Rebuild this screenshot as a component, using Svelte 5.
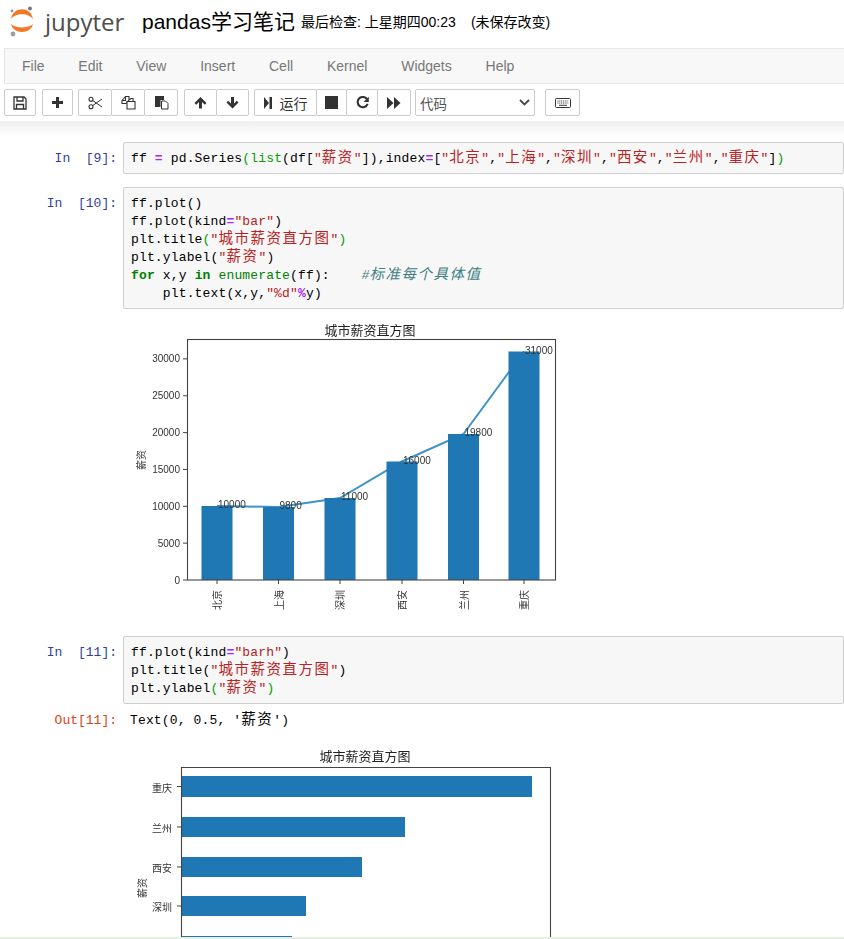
<script>
  const menus = ['File', 'Edit', 'View', 'Insert', 'Cell', 'Kernel', 'Widgets', 'Help'];

  const cityBars = [
    { name: '北京', x: 217, top: 506, value: 10000 },
    { name: '上海', x: 278.5, top: 507, value: 9800 },
    { name: '深圳', x: 340, top: 498, value: 11000 },
    { name: '西安', x: 402, top: 461.5, value: 16000 },
    { name: '兰州', x: 463.5, top: 434, value: 19800 },
    { name: '重庆', x: 524, top: 351.5, value: 31000 }
  ];
  const yTicks = [0, 5000, 10000, 15000, 20000, 25000, 30000];
  const linePoints = cityBars.map((b) => `${b.x - 187},${b.top - 325}`).join(' ');

  // the last bar runs off the bottom of the window, its label is not visible
  const hBars = [
    { name: '重庆', y: 776, h: 21, w: 351 },
    { name: '兰州', y: 817, h: 20, w: 224 },
    { name: '西安', y: 857, h: 20, w: 181 },
    { name: '深圳', y: 896, h: 20, w: 125 },
    { name: '', y: 936, h: 20, w: 111 }
  ];
</script>

<div class="page">
  <header class="site-header">
    <svg class="logo" width="32" height="38" viewBox="9 5 32 38">
      <path d="M11 19C13 6 31 6 33 19C29 12.500 15 12.500 11 19Z" fill="#f37726" />
      <path d="M11 24C13 34.500 31 34.500 33 24C29 28.500 15 28.500 11 24Z" fill="#f37726" />
      <circle cx="30" cy="8.500" r="1.900" fill="#767677" />
      <circle cx="12" cy="11" r="1.400" fill="#989798" />
      <circle cx="13" cy="34" r="2.400" fill="#9e9e9e" />
    </svg>
    <span class="wordmark">jupyter</span>
    <span class="nb-name">pandas学习笔记</span>
    <span class="checkpoint">最后检查: 上星期四00:23</span>
    <span class="autosave">(未保存改变)</span>
  </header>

  <nav class="menubar">
    {#each menus as m}
      <span class="menu-item">{m}</span>
    {/each}
  </nav>

  <div class="toolbar">
    <div class="btn-group">
      <button class="btn w32" aria-label="save">
        <svg width="14" height="14" viewBox="0 0 14 14"><path d="M1 1h10l2 2v10H1z M4 1v4h6V1 M3.500 13V8.500h7V13" fill="none" stroke="#333" stroke-width="1.300" /></svg>
      </button>
    </div>
    <div class="btn-group tight">
      <button class="btn w31" aria-label="insert">
        <svg width="13" height="13" viewBox="0 0 13 13"><path d="M5 1h3v4h4v3H8v4H5V8H1V5h4z" fill="#333" /></svg>
      </button>
    </div>
    <div class="btn-group">
      <button class="btn w34" aria-label="cut">
        <svg width="15" height="14" viewBox="0 0 15 14"><circle cx="3" cy="3.200" r="2" fill="none" stroke="#333" stroke-width="1.100" /><circle cx="3" cy="10.800" r="2" fill="none" stroke="#333" stroke-width="1.100" /><path d="M4.600 4.400L14 11M4.600 9.600L14 3" stroke="#333" stroke-width="1" /></svg>
      </button>
      <button class="btn w34" aria-label="copy">
        <svg width="15" height="15" viewBox="0 0 15 15"><path d="M1 5.500L4.500 1.500H8V5L5 8.500H1z M4.500 1.500V5.500H1 M8 5L10 3.500h2V6" fill="none" stroke="#333" stroke-width="1.100" /><path d="M6 6.500h8v7.500H6z" fill="#fff" stroke="#333" stroke-width="1.100" /></svg>
      </button>
      <button class="btn w34" aria-label="paste">
        <svg width="15" height="15" viewBox="0 0 15 15"><path d="M1 1h9v4H6.500v7H1z" fill="#333" /><path d="M7.500 6h4l2.500 2.500V14H7.500z" fill="#fff" stroke="#333" stroke-width="1" /></svg>
      </button>
    </div>
    <div class="btn-group tight">
      <button class="btn w33" aria-label="up">
        <svg width="13" height="13" viewBox="0 0 13 13"><path d="M6.500 1L12.500 7L10.800 8.700L8 5.900V12.500H5V5.900L2.200 8.700L.5 7z" fill="#333" /></svg>
      </button>
      <button class="btn w33" aria-label="down">
        <svg width="13" height="13" viewBox="0 0 13 13"><path d="M6.500 12.500L12.500 6.500L10.800 4.800L8 7.600V1H5V7.600L2.200 4.800L.5 6.500z" fill="#333" /></svg>
      </button>
    </div>
    <div class="btn-group run-group">
      <button class="btn run">
        <svg width="8" height="12" viewBox="0 0 8 12"><path d="M0 0L5 6L0 12z M5.500 0H8V12H5.500z" fill="#333" /></svg>
        <span>运行</span>
      </button>
      <button class="btn w31" aria-label="stop">
        <svg width="13" height="13" viewBox="0 0 13 13"><rect width="13" height="13" fill="#333" /></svg>
      </button>
      <button class="btn w32" aria-label="restart">
        <svg width="13" height="13" viewBox="0 0 13 13"><path d="M11 3.200A5.100 5.100 0 1 0 11.600 7.800" fill="none" stroke="#333" stroke-width="2.100" /><path d="M12.800 .8V6H7.600z" fill="#333" /></svg>
      </button>
      <button class="btn w34" aria-label="run all">
        <svg width="14" height="12" viewBox="0 0 14 12"><path d="M0 0L6.500 6L0 12z M7 0L13.500 6L7 12z" fill="#333" /></svg>
      </button>
    </div>
    <div class="cell-type">
      <span>代码</span>
      <svg width="11" height="7" viewBox="0 0 11 7"><path d="M1 1L5.500 5.500L10 1" fill="none" stroke="#444" stroke-width="1.800" /></svg>
    </div>
    <button class="btn kb" aria-label="keyboard">
      <svg width="16" height="10" viewBox="0 0 16 10"><rect x=".5" y=".5" width="15" height="9" rx="1" fill="none" stroke="#333" /><path d="M2.500 3h11M2.500 5h11" stroke="#333" stroke-dasharray="1 .8" /><path d="M4 7.300h8" stroke="#333" /></svg>
    </button>
  </div>

  <main class="notebook">
    <section class="cell first">
      <div class="prompt in">In&nbsp;&nbsp;[9]:</div>
      <pre class="input">ff <span class="o">=</span> pd.Series<span class="g">(list</span>(df[<span class="s">"<span class="zh">薪资</span>"</span>]),index<span class="o">=</span>[<span class="s">"<span class="zh">北京</span>"</span>,<span class="s">"<span class="zh">上海</span>"</span>,<span class="s">"<span class="zh">深圳</span>"</span>,<span class="s">"<span class="zh">西安</span>"</span>,<span class="s">"<span class="zh">兰州</span>"</span>,<span class="s">"<span class="zh">重庆</span>"</span>]<span class="g">)</span></pre>
    </section>

    <section class="cell">
      <div class="prompt in">In&nbsp;&nbsp;[10]:</div>
      <pre class="input">ff.plot()
ff.plot(kind<span class="o">=</span><span class="s">"bar"</span>)
plt.title<span class="g">(</span><span class="s">"<span class="zh">城市薪资直方图</span>"</span><span class="g">)</span>
plt.ylabel(<span class="s">"<span class="zh">薪资</span>"</span>)
<span class="k">for</span> x,y <span class="k">in</span> <span class="b">enumerate</span>(ff):    <span class="c">#<span class="zh">标准每个具体值</span></span>
    plt.text(x,y,<span class="s">"%d"</span><span class="o">%</span>y)</pre>
    </section>

    <div class="output chart-one">
      <svg width="440" height="292" viewBox="0 0 440 292">
        <text x="183" y="9.500" class="chart-title" text-anchor="middle">城市薪资直方图</text>
        <polyline points={linePoints} fill="none" stroke="#3f93c9" stroke-width="2" />
        {#each cityBars as b}
          <rect x={b.x - 187 - 15.5} y={b.top - 325} width="31" height={580 - b.top} fill="#1f77b4" />
          <line x1={b.x - 187} y1="255" x2={b.x - 187} y2="259" stroke="#444" />
          <text x={b.x - 187 + 1} y={b.top - 325 + 2} class="tick">{b.value}</text>
          <text transform="translate({b.x - 187 + 4},285) rotate(-90)" class="tick">{b.name}</text>
        {/each}
        {#each yTicks as t}
          <line x1="-4" y1={255 - t * 0.00737} x2="0" y2={255 - t * 0.00737} stroke="#444" />
          <text x="-7" y={255 - t * 0.00737 + 3.5} class="tick" text-anchor="end">{t}</text>
        {/each}
        <text transform="translate(-42.500,135) rotate(-90)" class="tick" text-anchor="middle">薪资</text>
        <rect x=".5" y="14.500" width="368" height="240.500" fill="none" stroke="#444" stroke-width="1.100" />
      </svg>
    </div>

    <section class="cell third">
      <div class="prompt in">In&nbsp;&nbsp;[11]:</div>
      <pre class="input">ff.plot(kind<span class="o">=</span><span class="s">"barh"</span>)
plt.title(<span class="s">"<span class="zh">城市薪资直方图</span>"</span>)
plt.ylabel<span class="g">(</span><span class="s">"<span class="zh">薪资</span>"</span><span class="g">)</span></pre>
    </section>

    <section class="cell out-row">
      <div class="prompt out">Out[11]:</div>
      <pre class="out-text">Text(0, 0.5, '<span class="zh">薪资</span>')</pre>
    </section>

    <div class="output chart-two">
      <svg width="440" height="200" viewBox="0 0 440 200">
        <text x="184" y="6" class="chart-title" text-anchor="middle">城市薪资直方图</text>
        {#each hBars as b}
          <rect x="0" y={b.y - 755} width={b.w} height={b.h} fill="#1f77b4" />
          {#if b.name}
            <line x1="-4" y1={b.y - 755 + b.h / 2} x2="0" y2={b.y - 755 + b.h / 2} stroke="#444" />
            <text x="-9" y={b.y - 755 + b.h / 2 + 5} class="tick" text-anchor="end">{b.name}</text>
          {/if}
        {/each}
        <text transform="translate(-35.500,133) rotate(-90)" class="tick" text-anchor="middle">薪资</text>
        <path d="M.5 200V12.500H369.500V200" fill="none" stroke="#444" stroke-width="1.100" />
      </svg>
    </div>
  </main>

  <div class="status-edge"></div>
</div>

<style>
  :global(body) {
    margin: 0;
    background: #fff;
  }

  .page {
    position: relative;
    width: 844px;
    height: 939px;
    overflow: hidden;
    font-family: "Liberation Sans", "Noto Sans CJK SC", sans-serif;
    color: #000;
  }

  .site-header {
    height: 48px;
    display: flex;
    align-items: center;
    padding: 0 0 6px 9px;
    box-sizing: border-box;
  }

  .logo {
    flex: none;
    align-self: flex-start;
    margin-top: 5px;
  }

  .wordmark {
    font-family: "Open Sans", sans-serif;
    font-size: 24px;
    color: #4e4e4e;
    width: 97px;
    margin-left: 4px;
    box-sizing: border-box;
  }

  .nb-name {
    font-size: 21px;
    margin-top: -3px;
  }

  .checkpoint {
    font-size: 14px;
    margin-left: 6px;
    width: 170px;
  }

  .autosave {
    font-size: 14px;
  }

  .menubar {
    height: 36px;
    margin-left: 4px;
    box-sizing: border-box;
    background: #f8f8f8;
    border: 1px solid #e7e7e7;
    border-right: none;
    display: flex;
    align-items: center;
    padding-left: 17px;
    gap: 33.8px;
    font-size: 14px;
    color: #777;
  }

  .toolbar {
    display: flex;
    align-items: center;
    height: 37px;
    padding-left: 4px;
    box-sizing: border-box;
  }

  .btn-group {
    display: flex;
    margin-right: 6px;
  }

  .btn-group.tight {
    margin-right: 5px;
  }

  .btn-group.run-group {
    margin-right: 4px;
  }

  .btn {
    height: 27px;
    box-sizing: border-box;
    padding: 0;
    display: flex;
    align-items: center;
    justify-content: center;
    background: #fff;
    border: 1px solid #ccc;
    border-radius: 2px;
    font-family: inherit;
    font-size: 14px;
    color: #333;
    margin-left: -1px;
  }

  .btn-group .btn:first-child {
    margin-left: 0;
  }

  .w31 { width: 31px; }
  .w32 { width: 32px; }
  .w33 { width: 33px; }
  .w34 { width: 34px; }

  .run {
    width: 63px;
    gap: 8px;
  }

  .cell-type {
    width: 120px;
    height: 27px;
    box-sizing: border-box;
    border: 1px solid #ccc;
    border-radius: 2px;
    display: flex;
    align-items: center;
    justify-content: space-between;
    padding: 0 4px 0 4px;
    font-size: 13.5px;
    color: #555;
  }

  .kb {
    width: 35px;
    margin-left: 10px;
  }

  .notebook {
    background: linear-gradient(#eee, #fff) 0 0 / 100% 15px no-repeat;
    padding-top: 21px;
  }

  .cell {
    display: flex;
  }

  .first {
    margin-bottom: 13px;
  }

  .third {
    margin-top: 19px;
  }

  .prompt {
    width: 117px;
    margin-right: 6px;
    flex: none;
    text-align: right;
    font-family: "Liberation Mono", "Noto Sans CJK SC", monospace;
    font-size: 13px;
    line-height: 18px;
    padding-top: 8px;
    box-sizing: border-box;
  }

  .in { color: #303f9f; }
  .out { color: #d84315; padding-top: 8px; }

  .input {
    flex: 1;
    margin: 0;
    padding: 7px 7px 5px 7px;
    background: #f7f7f7;
    border: 1px solid #cfcfcf;
    border-radius: 2px;
    font-family: "Liberation Mono", "Noto Sans CJK SC", monospace;
    font-size: 13px;
    line-height: 18px;
    letter-spacing: .15px;
    color: #000;
    white-space: pre;
    overflow: hidden;
  }

  .out-text {
    margin: 0;
    padding-top: 8px;
    padding-left: 7px;
    font-family: "Liberation Mono", "Noto Sans CJK SC", monospace;
    font-size: 13px;
    line-height: 18px;
    letter-spacing: .15px;
  }

  .zh {
    font-size: 14.5px;
    line-height: 1;
    letter-spacing: 1.5px;
  }

  .o { color: #a2f; font-weight: 700; }
  .s { color: #ba2121; }
  .k { color: #008000; font-weight: 700; }
  .b { color: #008000; }
  .g { color: #00a000; }
  .c { color: #408080; font-style: italic; }

  .output svg {
    display: block;
    overflow: visible;
    filter: blur(.35px);
  }

  .chart-one {
    margin: 16px 0 0 187px;
    height: 292px;
  }

  .chart-two {
    margin: 25px 0 0 181px;
  }

  .chart-title {
    font-size: 13px;
    fill: #222;
  }

  .tick {
    font-size: 10px;
    fill: #333;
  }

  .status-edge {
    position: absolute;
    left: 0;
    right: 0;
    bottom: 0;
    height: 2px;
    background: #e9efe3;
  }
</style>
